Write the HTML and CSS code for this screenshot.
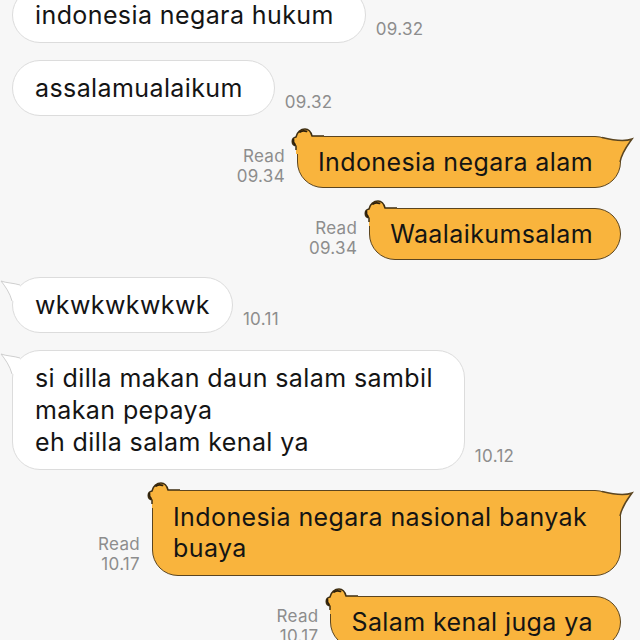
FILE: index.html
```html
<!DOCTYPE html>
<html lang="id">
<head>
<meta charset="utf-8">
<title>Chat</title>
<link rel="stylesheet" href="styles.css">
</head>
<body>
<main class="chat">
  <div class="row in">
    <div class="bubble bubble-in"><span class="txt">indonesia negara hukum</span></div>
    <span class="time">09.32</span>
  </div>

  <div class="row in">
    <div class="bubble bubble-in"><span class="txt">assalamualaikum</span></div>
    <span class="time">09.32</span>
  </div>

  <div class="row out">
    <div class="meta"><span>Read</span><span>09.34</span></div>
    <div class="bubble bubble-out">
      <svg class="ears" width="36" height="30" viewBox="0 0 36 30">
        <path class="ears-fill" d="M8,28 L8,20 C3,19 3,12 8,11 C9,6 13,3 17,3 C21,3 23,6 24,10 L36,10 L36,28 Z"/>
        <path class="ears-line" d="M8,24 L8,20 C3,19 3,12 8,11 C9,6 13,3 17,3 C21,3 23,6 24,10 L36,10"/>
        <path class="ears-tip" d="M5.5,13.5 C5,15.5 5.5,17 7,18.5 M12,6 C14,4.8 16.5,4.6 18.5,5.4"/>
      </svg>
      <span class="txt">Indonesia negara alam</span>
      <svg class="tail-out" width="32" height="30" viewBox="0 0 32 30">
        <path class="tail-fill" d="M0,1.5 C10,4 22,6 30,3 C25,10 20,16 18,26 L0,26 Z"/>
        <path class="tail-line" d="M0,1.5 C10,4 22,6 30,3 C25,10 20,16 18,26"/>
      </svg>
    </div>
  </div>

  <div class="row out">
    <div class="meta"><span>Read</span><span>09.34</span></div>
    <div class="bubble bubble-out">
      <svg class="ears" width="36" height="30" viewBox="0 0 36 30">
        <path class="ears-fill" d="M8,28 L8,20 C3,19 3,12 8,11 C9,6 13,3 17,3 C21,3 23,6 24,10 L36,10 L36,28 Z"/>
        <path class="ears-line" d="M8,24 L8,20 C3,19 3,12 8,11 C9,6 13,3 17,3 C21,3 23,6 24,10 L36,10"/>
        <path class="ears-tip" d="M5.5,13.5 C5,15.5 5.5,17 7,18.5 M12,6 C14,4.8 16.5,4.6 18.5,5.4"/>
      </svg>
      <span class="txt">Waalaikumsalam</span>
    </div>
  </div>

  <div class="row in">
    <div class="bubble bubble-in bubble-short">
      <svg class="tail-in" width="30" height="30" viewBox="0 0 30 30">
        <path class="tail-in-fill" d="M20,8 C14,6 6,6 1,4 C5,9 10,16 12,24 L20,24 Z"/>
        <path class="tail-in-line" d="M20,8 C14,6 6,6 1,4 C5,9 10,16 12,24"/>
      </svg>
      <span class="txt">wkwkwkwkwk</span>
    </div>
    <span class="time">10.11</span>
  </div>

  <div class="row in">
    <div class="bubble bubble-in">
      <svg class="tail-in" width="30" height="30" viewBox="0 0 30 30">
        <path class="tail-in-fill" d="M20,8 C14,6 6,6 1,4 C5,9 10,16 12,24 L20,24 Z"/>
        <path class="tail-in-line" d="M20,8 C14,6 6,6 1,4 C5,9 10,16 12,24"/>
      </svg>
      <span class="txt">si dilla makan daun salam sambil<br>makan pepaya<br>eh dilla salam kenal ya</span>
    </div>
    <span class="time">10.12</span>
  </div>

  <div class="row out">
    <div class="meta"><span>Read</span><span>10.17</span></div>
    <div class="bubble bubble-out bubble-wide">
      <svg class="ears" width="36" height="30" viewBox="0 0 36 30">
        <path class="ears-fill" d="M8,28 L8,20 C3,19 3,12 8,11 C9,6 13,3 17,3 C21,3 23,6 24,10 L36,10 L36,28 Z"/>
        <path class="ears-line" d="M8,24 L8,20 C3,19 3,12 8,11 C9,6 13,3 17,3 C21,3 23,6 24,10 L36,10"/>
        <path class="ears-tip" d="M5.5,13.5 C5,15.5 5.5,17 7,18.5 M12,6 C14,4.8 16.5,4.6 18.5,5.4"/>
      </svg>
      <span class="txt">Indonesia negara nasional banyak<br>buaya</span>
      <svg class="tail-out" width="32" height="30" viewBox="0 0 32 30">
        <path class="tail-fill" d="M0,1.5 C10,4 22,6 30,3 C25,10 20,16 18,26 L0,26 Z"/>
        <path class="tail-line" d="M0,1.5 C10,4 22,6 30,3 C25,10 20,16 18,26"/>
      </svg>
    </div>
  </div>

  <div class="row out">
    <div class="meta"><span>Read</span><span>10.17</span></div>
    <div class="bubble bubble-out">
      <svg class="ears" width="36" height="30" viewBox="0 0 36 30">
        <path class="ears-fill" d="M8,28 L8,20 C3,19 3,12 8,11 C9,6 13,3 17,3 C21,3 23,6 24,10 L36,10 L36,28 Z"/>
        <path class="ears-line" d="M8,24 L8,20 C3,19 3,12 8,11 C9,6 13,3 17,3 C21,3 23,6 24,10 L36,10"/>
        <path class="ears-tip" d="M5.5,13.5 C5,15.5 5.5,17 7,18.5 M12,6 C14,4.8 16.5,4.6 18.5,5.4"/>
      </svg>
      <span class="txt">Salam kenal juga ya</span>
    </div>
  </div>
</main>
</body>
</html>
```

FILE: styles.css
```css
html, body {
  margin: 0;
  height: 100%;
  overflow: hidden;
  background: #f7f7f7;
}

.chat {
  display: flex;
  flex-direction: column;
  padding: 0 19px 0 12px;
  margin-top: -13px;
  font-family: Inter, "Liberation Sans", Arial, sans-serif;
  color: #141414;
}

.row {
  display: flex;
  align-items: flex-end;
}

.row.in {
  justify-content: flex-start;
  margin-top: 17px;
}

.row.out {
  justify-content: flex-end;
  margin-top: 20px;
}

.row:first-child {
  margin-top: 0;
}

.bubble {
  position: relative;
  font-size: 25px;
  letter-spacing: 0.4px;
  box-sizing: border-box;
}

.txt {
  position: relative;
  z-index: 1;
}

.bubble-in {
  background: #ffffff;
  border: 1px solid #dcdcdc;
  border-radius: 28px;
  padding: 11px 31px 11px 22px;
  line-height: 32px;
}

.bubble-short {
  padding-right: 22px;
}

.bubble-out {
  background: #f9b43d;
  border: 1.5px solid #5b4520;
  border-radius: 26px;
  border-top-left-radius: 10px;
  padding: 9.5px 27px 9.5px 20px;
  line-height: 31px;
}

.bubble-wide {
  width: 469px;
  padding-top: 11px;
  padding-bottom: 11px;
}

.time {
  margin: 0 0 4px 10px;
  font-size: 17px;
  letter-spacing: 0.3px;
  line-height: 20px;
  color: #8d8d8d;
}

.meta {
  display: flex;
  flex-direction: column;
  align-items: flex-end;
  margin: 0 12px 2px 0;
  font-size: 17px;
  letter-spacing: 0.3px;
  line-height: 20px;
  color: #8d8d8d;
}

/* cat ears sitting on the top-left corner of sent bubbles */
.ears {
  position: absolute;
  left: -9.5px;
  top: -11.5px;
  overflow: visible;
}

.ears-fill {
  fill: #f9b43d;
}

.ears-line {
  fill: none;
  stroke: #3e2e12;
  stroke-width: 1.5;
  stroke-linejoin: round;
}

.ears-tip {
  fill: none;
  stroke: #2a1e0c;
  stroke-width: 1.8;
  stroke-linecap: round;
}

/* curled tail on the top-right of sent bubbles */
.tail-out {
  position: absolute;
  right: -13.5px;
  top: -1.5px;
  overflow: visible;
}

.tail-fill {
  fill: #f9b43d;
}

.tail-line {
  fill: none;
  stroke: #5b4520;
  stroke-width: 1.5;
}

/* hook on the top-left of received bubbles */
.tail-in {
  position: absolute;
  left: -13px;
  top: -1px;
  overflow: visible;
}

.tail-in-fill {
  fill: #ffffff;
}

.tail-in-line {
  fill: none;
  stroke: #cfcfcf;
  stroke-width: 1;
}
```
